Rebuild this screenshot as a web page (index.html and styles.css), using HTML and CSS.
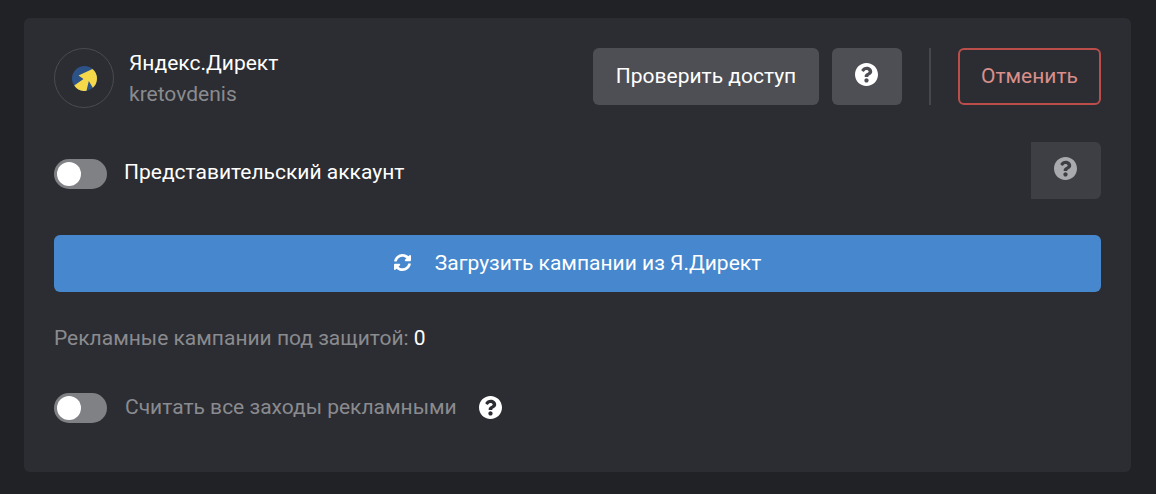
FILE: index.html
```html
<!DOCTYPE html>
<html lang="en">
<head>
  <meta charset="UTF-8">
  <meta name="viewport" content="width=device-width, initial-scale=1.0">
  <title>Яндекс.Директ</title>
  <link rel="stylesheet" href="styles.css">
</head>
<body>
  <svg class="icon-defs" width="0" height="0">
    <symbol id="question" viewBox="8 8 496 496">
      <path fill="currentColor" d="M504 256c0 136.997-111.043 248-248 248S8 392.997 8 256C8 119.083 119.043 8 256 8s248 111.083 248 248zM262.655 90c-54.497 0-89.255 22.957-116.549 63.758-3.536 5.286-2.353 12.415 2.715 16.258l34.699 26.31c5.205 3.947 12.621 3.008 16.665-2.122 17.864-22.658 30.113-35.797 57.303-35.797 20.429 0 45.698 13.148 45.698 32.958 0 14.976-12.363 22.667-32.534 33.976C247.128 238.528 216 254.941 216 296v4c0 6.627 5.373 12 12 12h56c6.627 0 12-5.373 12-12v-1.333c0-28.462 83.186-29.647 83.186-106.667 0-58.002-60.165-102-116.531-102zM256 338c-25.365 0-46 20.635-46 46 0 25.364 20.635 46 46 46s46-20.636 46-46c0-25.365-20.635-46-46-46z"/>
    </symbol>
  </svg>

  <div class="card">
    <!-- Account header -->
    <div class="header">
      <div class="logo-ring">
        <svg class="logo" viewBox="0 0 25 25">
          <circle cx="12.5" cy="12.5" r="12.5" fill="#2c5288"/>
          <path fill="#f6d94a" d="M6.5 9.5 L20.5 2.9 A12.5 12.5 0 0 1 25 12.5 A12.5 12.5 0 0 1 20.8 21.8 L16.8 15 L14.5 24.8 A12.5 12.5 0 0 1 2.2 19.6 L11.5 13 Z"/>
        </svg>
      </div>
      <div class="account">
        <div class="account-name">Яндекс.Директ</div>
        <div class="account-login">kretovdenis</div>
      </div>
      <div class="actions">
        <button class="btn btn-gray btn-check">Проверить доступ</button>
        <button class="btn btn-gray btn-help"><svg class="help-icon"><use href="#question"/></svg></button>
        <div class="separator"></div>
        <button class="btn btn-cancel">Отменить</button>
      </div>
    </div>

    <!-- Agency account -->
    <div class="agency-row">
      <div class="toggle"><span class="knob"></span></div>
      <div class="agency-label">Представительский аккаунт</div>
      <button class="btn btn-help btn-disabled"><svg class="help-icon"><use href="#question"/></svg></button>
    </div>

    <button class="btn btn-load">
      <svg class="sync-icon" viewBox="8 8 496 496">
        <path fill="currentColor" d="M370.72 133.28C339.458 104.008 298.888 87.962 255.848 88c-77.458.068-144.328 53.178-162.791 126.85-1.344 5.363-6.122 9.15-11.651 9.15H24.103c-7.498 0-13.194-6.807-11.807-14.176C33.933 94.924 134.813 8 256 8c66.448 0 126.791 26.136 171.315 68.685L463.03 40.97C478.149 25.851 504 36.559 504 57.941V192c0 13.255-10.745 24-24 24H345.941c-21.382 0-32.09-25.851-16.971-40.971l41.75-41.749zM32 296h134.059c21.382 0 32.09 25.851 16.971 40.971l-41.75 41.75c31.262 29.273 71.835 45.319 114.876 45.28 77.418-.07 144.315-53.144 162.787-126.849 1.344-5.363 6.122-9.15 11.651-9.15h57.304c7.498 0 13.194 6.807 11.807 14.176C478.067 417.076 377.187 504 256 504c-66.448 0-126.791-26.136-171.315-68.685L48.97 471.03C33.851 486.149 8 475.441 8 454.059V320c0-13.255 10.745-24 24-24z"/>
      </svg>
      Загрузить кампании из Я.Директ
    </button>

    <div class="stat">Рекламные кампании под защитой: <span class="stat-value">0</span></div>

    <div class="count-row">
      <div class="toggle"><span class="knob"></span></div>
      <div class="count-label">Считать все заходы рекламными</div>
      <svg class="help-icon count-help"><use href="#question"/></svg>
    </div>
  </div>
</body>
</html>
```

FILE: styles.css
```css
body {
  margin: 0;
  height: 494px;
  overflow: hidden;
  padding: 18px 25px 0 24px;
  box-sizing: border-box;
  background-color: #212226;
  font-family: Roboto, "Liberation Sans", sans-serif;
  font-size: 21px;
  color: #fff;
}

.icon-defs {
  position: absolute;
}

.card {
  height: 454px;
  box-sizing: border-box;
  padding: 30px 30px 0;
  background-color: #2c2d32;
  border-radius: 6px;
}

.header {
  display: flex;
  align-items: flex-start;
  height: 60px;
}

.logo-ring {
  width: 60px;
  height: 60px;
  box-sizing: border-box;
  border: 1px solid #4a4b50;
  border-radius: 50%;
  display: flex;
  align-items: center;
  justify-content: center;
}

.logo {
  width: 25px;
  height: 25px;
  margin-top: 1px;
}

.account {
  margin-left: 15px;
}

.account-name {
  line-height: 30px;
}

.account-login {
  margin-top: 1px;
  line-height: 30px;
  color: #8a8b8f;
}

.actions {
  margin-left: auto;
  display: flex;
  align-items: stretch;
  height: 57px;
}

.btn {
  border: 0;
  border-radius: 6px;
  padding: 0 0 2px;
  font-family: inherit;
  font-size: 21px;
  color: #fff;
  display: flex;
  align-items: center;
  justify-content: center;
}

.btn-gray {
  background-color: #4e4f54;
}

.btn-check {
  width: 226px;
}

.btn-help {
  width: 70px;
  margin-left: 13px;
  padding: 0 2px 0 0;
}

.help-icon {
  width: 23px;
  height: 23px;
  color: #fff;
  margin-top: -4px;
}

.separator {
  width: 2px;
  margin: 0 27px;
  background-color: #46474c;
}

.btn-cancel {
  width: 143px;
  box-sizing: border-box;
  background: transparent;
  border: 2px solid #bb4e4a;
  color: #d98f8b;
}

.agency-row {
  display: flex;
  align-items: flex-start;
  height: 57px;
  margin-top: 34px;
}

.toggle {
  width: 53px;
  height: 30px;
  box-sizing: border-box;
  padding: 3px;
  background-color: #808185;
  border-radius: 15px;
}

.agency-row .toggle {
  margin-top: 17px;
}

.knob {
  display: block;
  width: 24px;
  height: 24px;
  background-color: #fff;
  border-radius: 50%;
}

.agency-label {
  margin: 15px 0 0 17px;
  line-height: 30px;
}

.btn-disabled {
  height: 57px;
  margin-left: auto;
  background-color: #3e3f44;
  border-radius: 0 6px 6px 0;
}

.btn-disabled .help-icon {
  color: #a9aaad;
}

.btn-load {
  width: 100%;
  height: 57px;
  margin-top: 36px;
  background-color: #4687cd;
}

.sync-icon {
  width: 17px;
  height: 17px;
  margin-right: 24px;
}

.stat {
  margin-top: 31px;
  line-height: 30px;
  color: #8a8b8f;
}

.stat-value {
  color: #fff;
}

.count-row {
  display: flex;
  align-items: center;
  height: 30px;
  margin-top: 40px;
}

.count-label {
  margin-left: 18px;
  padding-bottom: 2px;
  color: #8a8b8f;
}

.count-help {
  margin: -2px 0 0 22px;
}
```
